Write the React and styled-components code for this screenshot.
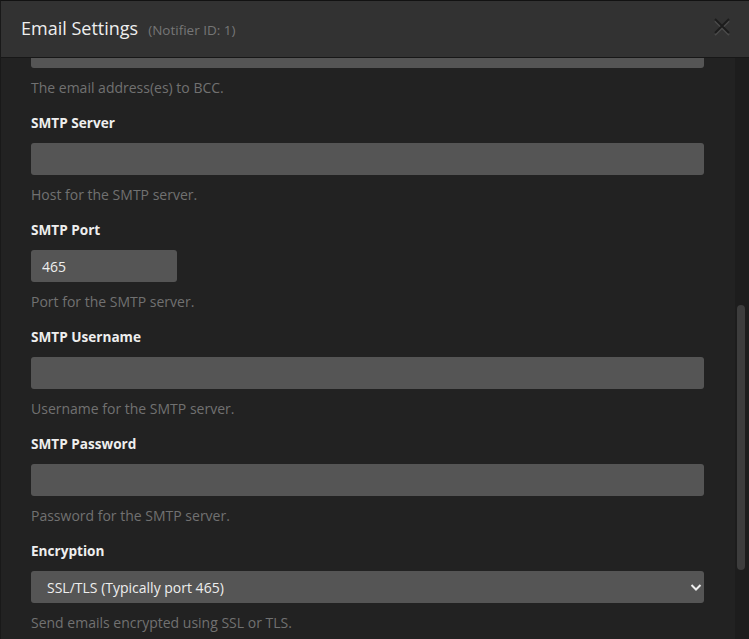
import React, { useLayoutEffect, useRef } from 'react';
import styled, { createGlobalStyle } from 'styled-components';

const Global = createGlobalStyle`
  html, body { margin: 0; padding: 0; height: 100%; background: #222222; overflow: hidden; }
  body { font-family: "Open Sans", "Liberation Sans", sans-serif; }
  #root { height: 100%; }
  * { box-sizing: border-box; }
`;

const Modal = styled.div`
  height: 100vh;
  display: flex;
  flex-direction: column;
  background: #222222;
  border-top: 1px solid #121212;
  border-left: 1px solid #191919;
`;

const Header = styled.div`
  flex: none;
  height: 57px;
  display: flex;
  align-items: center;
  padding: 0 17px 0 20px;
  background: #323232;
  border-bottom: 1px solid #171717;
`;

const Title = styled.h4`
  margin: 0;
  display: flex;
  align-items: baseline;
  gap: 10px;
  font-size: 18px;
  font-weight: 400;
  color: #eeeeee;
  line-height: 26px;
`;

const Sub = styled.span`
  font-size: 13.5px;
  color: #767676;
`;

const Close = styled.button`
  margin-left: auto;
  margin-bottom: 4px;
  background: none;
  border: none;
  padding: 0;
  width: 20px;
  height: 20px;
  display: flex;
  align-items: center;
  justify-content: center;
  cursor: pointer;
`;

const Body = styled.div`
  flex: 1;
  min-height: 0;
  display: flex;
`;

const Viewport = styled.div`
  flex: 1;
  overflow: hidden;
`;

const Rail = styled.div`
  flex: none;
  width: 14px;
  background: #1d1d1d;
  padding: 0 4px 0 2px;
`;

const Thumb = styled.div`
  width: 8px;
  border-radius: 5px;
  background: #3d3d3d;
`;

const Content = styled.div`
  padding: 0 31px 20px 30px;
`;

const Field = styled.div`
  display: flex;
  flex-direction: column;
  margin-bottom: 15px;
`;

const Label = styled.label`
  font-size: 13.6px;
  font-weight: 700;
  color: #eeeeee;
  line-height: 20px;
  margin-bottom: 10px;
`;

const Input = styled.input`
  height: 32px;
  width: ${p => (p.$narrow ? '146px' : '100%')};
  background: #555555;
  border: none;
  border-radius: 3px;
  color: #eeeeee;
  padding: 0 11px;
  font-family: inherit;
  font-size: 14px;
  outline: none;
`;

const SelectWrap = styled.div`
  position: relative;
  height: 32px;
`;

const Select = styled.select`
  appearance: none;
  -webkit-appearance: none;
  width: 100%;
  height: 32px;
  background: #555555;
  border: none;
  border-radius: 3px;
  color: #eeeeee;
  padding: 0 16px;
  font-family: inherit;
  font-size: 14px;
  outline: none;
`;

const Chevron = styled.svg`
  position: absolute;
  right: 1px;
  top: 12px;
  pointer-events: none;
`;

const Help = styled.p`
  margin: 10px 0 0;
  font-size: 14px;
  line-height: 20px;
  color: #717171;
`;

export default function App() {
  const viewRef = useRef(null);
  const bccRef = useRef(null);

  useLayoutEffect(() => {
    const v = viewRef.current;
    const bcc = bccRef.current;
    if (!v || !bcc) return;
    const b = v.getBoundingClientRect();
    const i = bcc.getBoundingClientRect();
    v.scrollTop = i.bottom - b.top - 10;
  }, []);

  return (
    <>
      <Global />
      <Modal>
        <Header>
          <Title>
            Email Settings <Sub>(Notifier ID: 1)</Sub>
          </Title>
          <Close aria-label="Close">
            <svg width="20" height="20" viewBox="0 0 20 20">
              <path d="M3 4 L17 18 M17 4 L3 18" stroke="#4a4a4a" strokeWidth="1.8" fill="none" />
              <path d="M3 2 L17 16 M17 2 L3 16" stroke="#1c1c1c" strokeWidth="1.8" fill="none" />
            </svg>
          </Close>
        </Header>
        <Body>
          <Viewport ref={viewRef}>
            <Content>
              <Field>
                <Input type="text" aria-label="BCC" ref={bccRef} />
                <Help>The email address(es) to BCC.</Help>
              </Field>
              <Field>
                <Label>SMTP Server</Label>
                <Input type="text" />
                <Help>Host for the SMTP server.</Help>
              </Field>
              <Field>
                <Label>SMTP Port</Label>
                <Input type="text" $narrow defaultValue="465" />
                <Help>Port for the SMTP server.</Help>
              </Field>
              <Field>
                <Label>SMTP Username</Label>
                <Input type="text" />
                <Help>Username for the SMTP server.</Help>
              </Field>
              <Field>
                <Label>SMTP Password</Label>
                <Input type="password" />
                <Help>Password for the SMTP server.</Help>
              </Field>
              <Field>
                <Label>Encryption</Label>
                <SelectWrap>
                  <Select defaultValue="ssl">
                    <option value="none">None</option>
                    <option value="starttls">STARTTLS (Typically port 587)</option>
                    <option value="ssl">SSL/TLS (Typically port 465)</option>
                  </Select>
                  <Chevron width="14" height="9" viewBox="0 0 14 9">
                    <path d="M2.5 2 L7 6.5 L11.5 2" stroke="#eeeeee" strokeWidth="2" fill="none" />
                  </Chevron>
                </SelectWrap>
                <Help>Send emails encrypted using SSL or TLS.</Help>
              </Field>
            </Content>
          </Viewport>
          <Rail>
            <Thumb style={{ marginTop: 247, height: 265 }} />
          </Rail>
        </Body>
      </Modal>
    </>
  );
}
